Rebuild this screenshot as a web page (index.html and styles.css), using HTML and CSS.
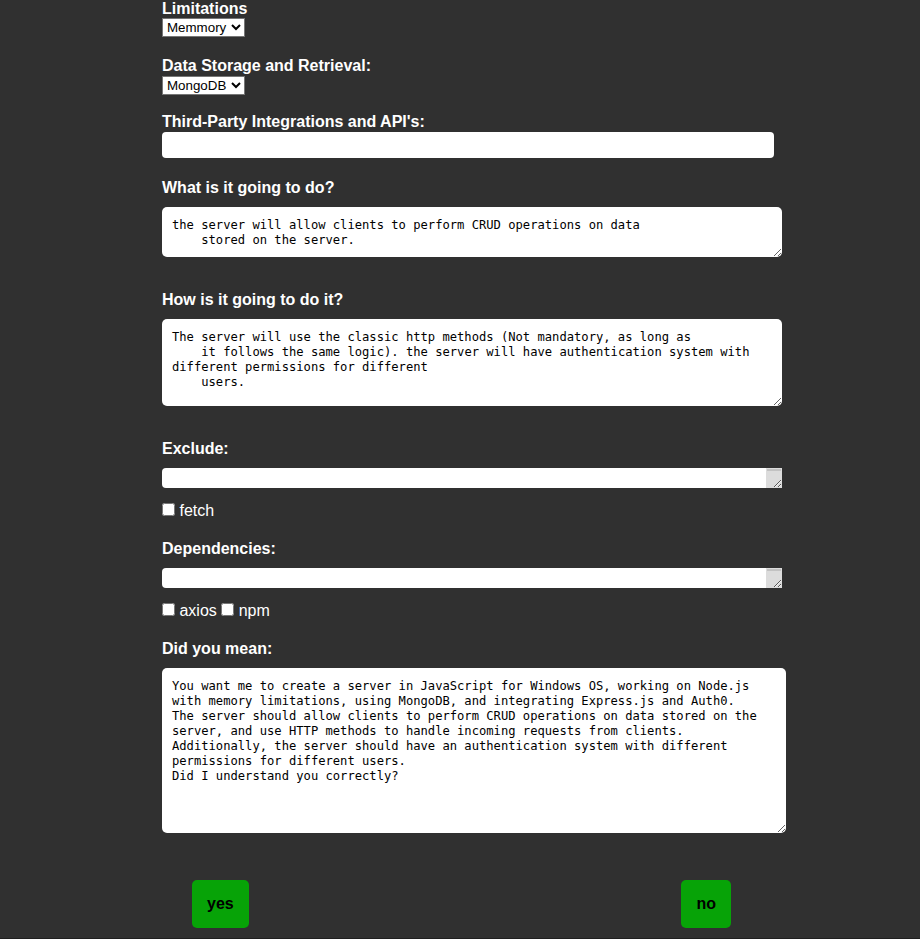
FILE: index.html
```html
<!DOCTYPE html>
<html lang="en">
<head>
<meta charset="utf-8">
<title>Server request</title>
<link rel="stylesheet" href="styles.css">
</head>
<body>
<main class="form">
  <label class="label label-first">Limitations</label>
  <select class="pick pick-first"><option>Memmory</option><option>CPU</option><option>Disk</option></select>

  <label class="label after-pick">Data Storage and Retrieval:</label>
  <select class="pick"><option>MongoDB</option><option>MySQL</option><option>Redis</option></select>

  <label class="label after-pick-2">Third-Party Integrations and API's:</label>
  <input class="text-input" type="text">

  <label class="label after-input">What is it going to do?</label>
  <textarea class="ta ta-do">the server will allow clients to perform CRUD operations on data
    stored on the server.</textarea>

  <label class="label after-ta">How is it going to do it?</label>
  <textarea class="ta ta-how">The server will use the classic http methods (Not mandatory, as long as
    it follows the same logic). the server will have authentication system with
different permissions for different
    users.</textarea>

  <label class="label after-ta">Exclude:</label>
  <textarea class="ta ta-mini"></textarea>
  <div class="checks"><input class="check" type="checkbox"> fetch</div>

  <label class="label after-checks">Dependencies:</label>
  <textarea class="ta ta-mini ta-mini-2"></textarea>
  <div class="checks"><input class="check" type="checkbox"> axios <input class="check" type="checkbox"> npm</div>

  <label class="label after-checks">Did you mean:</label>
  <textarea class="ta ta-wide">You want me to create a server in JavaScript for Windows OS, working on Node.js
with memory limitations, using MongoDB, and integrating Express.js and Auth0.
The server should allow clients to perform CRUD operations on data stored on the
server, and use HTTP methods to handle incoming requests from clients.
Additionally, the server should have an authentication system with different
permissions for different users.
Did I understand you correctly?</textarea>

  <div class="actions">
    <button class="btn" type="button">yes</button>
    <button class="btn" type="button">no</button>
  </div>
</main>
</body>
</html>
```
FILE: styles.css
```css
html {
  background: #303030;
  min-height: 100%;
  box-shadow: inset 0 1px 0 #d9d9d9, inset 0 -1px 0 #1f1f1f;
}

body {
  margin: 0;
  background: #303030;
  color: #ffffff;
  font-family: "Liberation Sans", Arial, sans-serif;
  font-size: 16px;
}

.form {
  display: flex;
  flex-direction: column;
  align-items: flex-start;
  width: 624px;
  margin-left: 162px;
}

.label {
  display: block;
  font-weight: bold;
  font-size: 16px;
  line-height: 18px;
}

.label-first { margin-top: 0; }
.after-pick { margin-top: 20px; }
.after-pick-2 { margin-top: 18px; }
.after-input { margin-top: 21px; }
.after-ta { margin-top: 34px; }
.after-checks { margin-top: 20px; }

.pick {
  box-sizing: border-box;
  width: 83px;
  height: 19px;
  margin-top: 1px;
  font-family: "Liberation Sans", Arial, sans-serif;
  font-size: 13.333px;
  color: #000;
  background: #fff;
}

.pick-first { margin-top: 0; }

.text-input {
  box-sizing: border-box;
  width: 612px;
  height: 26px;
  margin: 1px 0 0;
  border: none;
  border-radius: 4px;
  background: #fff;
  font-family: "Liberation Sans", Arial, sans-serif;
}

.ta {
  box-sizing: border-box;
  display: block;
  width: 620px;
  margin: 10px 0 0;
  border: none;
  border-radius: 5px;
  padding: 11px 9px 9px 10px;
  background: #fff;
  color: #000;
  font-family: "DejaVu Sans Mono", monospace;
  font-size: 12.15px;
  line-height: 15px;
}

.ta-do { height: 50px; }
.ta-how { height: 87px; }

.ta-mini {
  height: 20px;
  overflow: hidden;
  border-radius: 4px 0 0 4px;
  background:
    linear-gradient(#c2c2c2, #c2c2c2) no-repeat right 1px top 1px / 14px 2px,
    linear-gradient(#dcdcdc, #dcdcdc) no-repeat right top / 16px 100%,
    #fff;
}

.ta-mini-2 { margin-top: 10.5px; }

.ta-wide {
  width: 624px;
  height: 165px;
  margin-top: 10.5px;
}

.checks {
  margin-top: 13.5px;
  font-size: 16px;
  line-height: 18px;
}

.check {
  width: 13px;
  height: 13px;
  margin: 0;
  vertical-align: baseline;
}

.actions {
  align-self: stretch;
  display: flex;
  justify-content: space-between;
  margin-top: 47px;
  padding: 0 55px 0 30px;
}

.btn {
  height: 48px;
  padding: 0 15px;
  border: none;
  border-radius: 5px;
  background: #07a307;
  color: #000;
  font-family: "Liberation Sans", Arial, sans-serif;
  font-weight: bold;
  font-size: 16px;
}
```
